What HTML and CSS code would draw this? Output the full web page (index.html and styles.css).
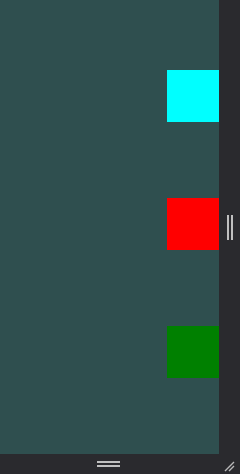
FILE: index.html
```html
<!DOCTYPE html>
<html lang="en">
<head>
  <meta charset="UTF-8">
  <title>Splitter</title>
  <link rel="stylesheet" href="styles.css">
</head>
<body>

  <div class="window">
    <div class="top-row">
      <div class="canvas">
        <div class="box cyan"></div>
        <div class="box red"></div>
        <div class="box green"></div>
      </div>
      <div class="side-bar">
        <div class="grip-v"></div>
      </div>
    </div>
    <div class="bottom-bar">
      <div class="grip-h"></div>
      <svg class="resize" width="12" height="12" viewBox="0 0 12 12">
        <path d="M2 11 L11 2 M6 11 L11 6" stroke="#b8b8b8" stroke-width="1.4" fill="none"/>
      </svg>
    </div>
  </div>

</body>
</html>
```

FILE: styles.css
```css
* {
  margin: 0;
  padding: 0;
  box-sizing: border-box;
}

body {
  width: 240px;
  height: 474px;
  background: #2a2a2e;
  overflow: hidden;
}

.window {
  display: flex;
  flex-direction: column;
  height: 474px;
}

.top-row {
  display: flex;
  height: 454px;
}

.canvas {
  width: 219px;
  background: #2f4f4f;
  display: flex;
  flex-direction: column;
  align-items: flex-end;
  padding-top: 70px;
  gap: 76px;
}

.box {
  width: 52px;
  height: 52px;
}

.cyan { background: #00ffff; }
.red { background: #ff0000; }
.green { background: #008000; }

.side-bar {
  width: 21px;
  background: #2a2a2e;
  display: flex;
  align-items: center;
  justify-content: center;
}

.grip-v {
  width: 6px;
  height: 25px;
  border-left: 2px solid #c0c0c0;
  border-right: 2px solid #c0c0c0;
}

.bottom-bar {
  position: relative;
  height: 20px;
  background: #2a2a2e;
  display: flex;
  align-items: center;
  justify-content: center;
  padding-right: 23px;
}

.grip-h {
  width: 23px;
  height: 6px;
  border-top: 2px solid #c0c0c0;
  border-bottom: 2px solid #c0c0c0;
}

.resize {
  position: absolute;
  right: 5px;
  bottom: 2px;
}
```
